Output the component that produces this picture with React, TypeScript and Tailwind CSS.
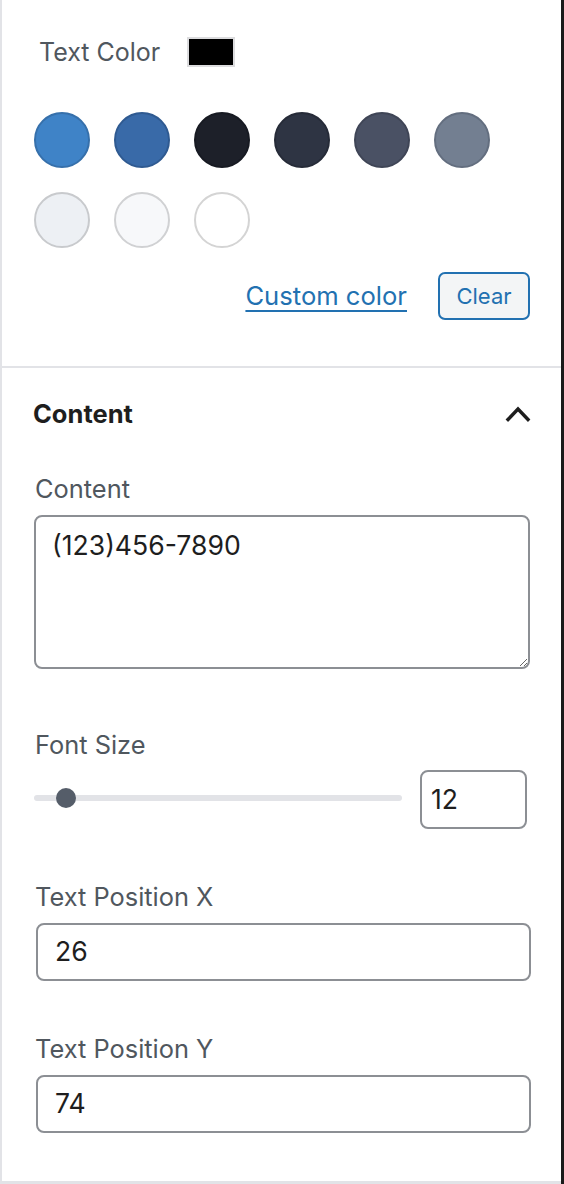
import React from "react";

const swatches = [
  { bg: "bg-[#3f83c7]", border: "border-[#3670ab]" },
  { bg: "bg-[#396aa8]", border: "border-[#2f5a91]" },
  { bg: "bg-[#1d2029]", border: "border-[#171a22]" },
  { bg: "bg-[#2e3443]", border: "border-[#262b38]" },
  { bg: "bg-[#4a5164]", border: "border-[#3f4556]" },
  { bg: "bg-[#737f91]", border: "border-[#636e7f]" },
  { bg: "bg-[#edf0f4]", border: "border-[#c8cacd]" },
  { bg: "bg-[#f7f8fa]", border: "border-[#d0d1d3]" },
  { bg: "bg-[#ffffff]", border: "border-[#d4d4d4]" },
];

export default function App() {
  return (
    <div
      className="w-[564px] h-[1184px] bg-white flex overflow-hidden"
      style={{ fontFamily: "Inter, 'Liberation Sans', sans-serif" }}
    >
      <div className="w-[2px] bg-[#e2e3e7] shrink-0" />
      <div className="flex-1 flex flex-col">
        {/* Text color section */}
        <div className="flex flex-col pt-[37px]">
          <div className="flex items-center pl-[37px] h-[30px]">
            <span className="text-[25px] leading-[30px] text-[#50575e]">Text Color</span>
            <div className="ml-[27px] w-[48px] h-[30px] bg-black border-2 border-[#dcdcde]" />
          </div>
          <div className="pl-[32px] mt-[45px] grid grid-cols-[repeat(6,56px)] gap-[24px]">
            {swatches.map((s, i) => (
              <div
                key={i}
                className={`w-[56px] h-[56px] rounded-full border-2 ${s.bg} ${s.border}`}
              />
            ))}
          </div>
          <div className="flex items-center justify-end pr-[31px] mt-[24px] gap-[31px]">
            <span className="text-[25.6px] text-[#2271b1] underline underline-offset-[5px] decoration-2">
              Custom color
            </span>
            <div className="w-[92px] h-[48px] rounded-[7px] border-2 border-[#2271b1] bg-[#f3f5f6] flex items-center justify-center text-[22px] text-[#2271b1]">
              Clear
            </div>
          </div>
        </div>
        <div className="mt-[46px] h-[2px] bg-[#e2e3e7]" />
        {/* Content section */}
        <div className="flex flex-col">
          <div className="mt-[30px] h-[32px] flex items-center justify-between pl-[31px] pr-[30px]">
            <span className="text-[25.5px] font-bold text-[#1e1e1e]">Content</span>
            <svg width="26" height="16" viewBox="0 0 26 16" fill="none">
              <path d="M3 13.5 L13 3 L23 13.5" stroke="#1e1e1e" strokeWidth="3.4" strokeLinecap="square" />
            </svg>
          </div>
          <div className="mt-[43px] pl-[33px] h-[32px] flex items-center text-[25.4px] text-[#50575e]">
            Content
          </div>
          <div className="mt-[10px] pl-[32px] pr-[31px]">
            <textarea
              readOnly
              defaultValue="(123)456-7890"
              className="block w-full h-[154px] rounded-[8px] border-2 border-[#8c8f94] pt-[12px] px-[16px] text-[26.6px] leading-[32px] text-[#1e1e1e] outline-none"
            />
          </div>
          <div className="mt-[60px] pl-[33px] h-[32px] flex items-center text-[25.4px] text-[#50575e]">
            Font Size
          </div>
          <div className="mt-[9px] pl-[32px] pr-[34px] flex items-center h-[59px]">
            <div className="relative w-[368px] h-[6px] rounded-full bg-[#e2e3e7] mt-[-4px]">
              <div className="absolute left-[22px] top-[-7px] w-[20px] h-[20px] rounded-full bg-[#555d69]" />
            </div>
            <div className="ml-[18px] w-[107px] h-[59px] rounded-[8px] border-2 border-[#8c8f94] flex items-center pl-[9px] text-[26.6px] text-[#1e1e1e]">
              12
            </div>
          </div>
          <div className="mt-[52px] pl-[33px] h-[32px] flex items-center text-[25.4px] text-[#50575e]">
            Text Position X
          </div>
          <div className="mt-[10px] pl-[34px] pr-[30px]">
            <div className="h-[58px] rounded-[8px] border-2 border-[#8c8f94] flex items-center pl-[17px] text-[26.6px] text-[#1e1e1e]">
              26
            </div>
          </div>
          <div className="mt-[52px] pl-[33px] h-[32px] flex items-center text-[25.4px] text-[#50575e]">
            Text Position Y
          </div>
          <div className="mt-[10px] pl-[34px] pr-[30px]">
            <div className="h-[58px] rounded-[8px] border-2 border-[#8c8f94] flex items-center pl-[17px] text-[26.6px] text-[#1e1e1e]">
              74
            </div>
          </div>
        </div>
        <div className="flex-1" />
        <div className="h-[3px] bg-[#e2e3e7]" />
      </div>
      <div className="w-[3px] bg-[#1a1a1a] shrink-0" />
    </div>
  );
}
